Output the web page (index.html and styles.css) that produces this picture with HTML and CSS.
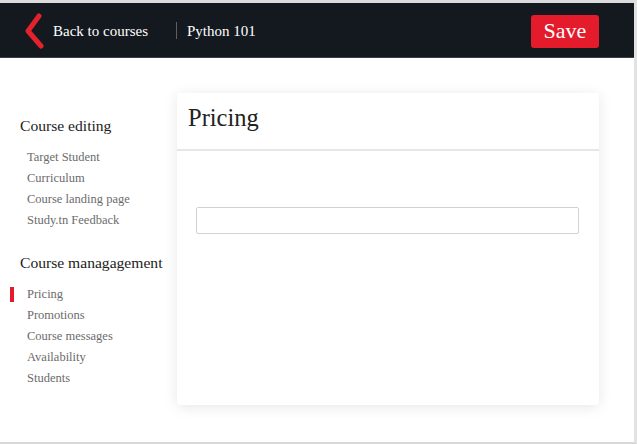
FILE: index.html
```html
<!DOCTYPE html>
<html>
<head>
<meta charset="utf-8">
<link rel="stylesheet" href="styles.css">
</head>
<body>
<div class="frame">
  <header class="topbar">
    <a class="back">
      <svg class="chev" width="24" height="36" viewBox="0 0 24 36"><path d="M16 3 L5 18 L18 33" fill="none" stroke="#e3222b" stroke-width="5" stroke-linecap="round" stroke-linejoin="round"/></svg>
      <span class="back-text">Back to courses</span>
    </a>
    <span class="sep"></span>
    <span class="course">Python 101</span>
    <button class="save">Save</button>
  </header>
  <div class="main">
    <nav class="sidebar">
      <div class="group-title">Course editing</div>
      <ul class="items">
        <li>Target Student</li>
        <li>Curriculum</li>
        <li>Course landing page</li>
        <li>Study.tn Feedback</li>
      </ul>
      <div class="group-title second">Course managagement</div>
      <ul class="items">
        <li class="active">Pricing</li>
        <li>Promotions</li>
        <li>Course messages</li>
        <li>Availability</li>
        <li>Students</li>
      </ul>
    </nav>
    <section class="card">
      <div class="card-head">Pricing</div>
      <div class="card-body">
        <input class="field" type="text">
      </div>
    </section>
  </div>
</div>
</body>
</html>
```

FILE: styles.css
```css
html, body {
  margin: 0;
  padding: 0;
  background: #ffffff;
}
.frame {
  width: 634px;
  height: 439px;
  border-top: 3px solid #dcdcdc;
  border-right: 3px solid #e2e2e2;
  border-bottom: 2px solid #d8d8d8;
  background: #fff;
  font-family: "Liberation Serif", serif;
  overflow: hidden;
  position: relative;
}
.topbar {
  height: 54px;
  background: #141920;
  display: flex;
  align-items: center;
  border-bottom: 1px solid #3a3f45;
}
.back {
  display: flex;
  align-items: center;
  margin-left: 23px;
  color: #fff;
}
.chev {
  display: block;
  margin-top: 2px;
}
.back-text {
  font-size: 15px;
  margin-left: 6px;
  margin-top: 2px;
}
.sep {
  width: 1px;
  height: 17px;
  background: #5b6067;
  margin-left: 28px;
}
.course {
  color: #fff;
  font-size: 15px;
  margin-left: 10px;
  margin-top: 2px;
}
.save {
  margin-left: auto;
  margin-right: 35px;
  margin-top: 3px;
  width: 68px;
  height: 33px;
  background: #e41b2b;
  color: #fff;
  border: none;
  border-radius: 3px;
  font-family: "Liberation Serif", serif;
  font-size: 22px;
  padding: 0 0 2px;
}
.main {
  display: flex;
  align-items: flex-start;
}
.sidebar {
  width: 177px;
  padding-top: 58px;
  box-sizing: border-box;
}
.group-title {
  font-size: 15.6px;
  line-height: 20px;
  color: #222;
  padding-left: 20px;
}
.group-title.second {
  margin-top: 22px;
}
.items {
  list-style: none;
  margin: 11px 0 0;
  padding: 0 0 0 27px;
}
.items li {
  font-size: 12.5px;
  line-height: 21px;
  color: #6b6b6b;
  position: relative;
}
.items li.active::before {
  content: "";
  position: absolute;
  left: -17px;
  top: 3px;
  width: 4px;
  height: 15px;
  background: #e41b2b;
}
.card {
  margin-top: 35px;
  width: 422px;
  height: 312px;
  background: #fff;
  border-radius: 3px;
  box-shadow: 0 2px 14px rgba(0,0,0,0.10);
}
.card-head {
  height: 58px;
  border-bottom: 2px solid #e6e6e6;
  box-sizing: border-box;
  padding: 10px 0 0 11px;
  font-size: 24.5px;
  line-height: 30px;
  color: #222;
}
.card-body {
  padding: 56px 20px 0 19px;
}
.field {
  display: block;
  width: 100%;
  height: 27px;
  box-sizing: border-box;
  border: 1px solid #d2d2d2;
  border-radius: 2px;
  background: #fff;
}
```
